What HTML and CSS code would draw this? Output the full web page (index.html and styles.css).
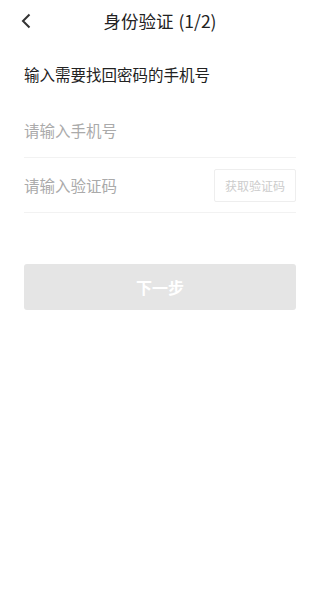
FILE: index.html
```html
<!DOCTYPE html>
<html lang="zh-CN">
<head>
    <meta charset="UTF-8">
    <meta name="viewport" content="width=device-width, initial-scale=1.0">
    <title>身份验证 (1/2)</title>
    <link rel="stylesheet" href="styles.css">
</head>
<body>
    <div class="header">
        <a href="#" class="back">
            <svg width="10" height="16" viewBox="0 0 10 16"><path d="M8.5 1.5 L2 8 L8.5 14.5" fill="none" stroke="#333" stroke-width="2"/></svg>
        </a>
        <h1>身份验证 (1/2)</h1>
    </div>

    <div class="content">
        <h2>输入需要找回密码的手机号</h2>
        <form id="verifyForm">
            <div class="input-row">
                <input type="tel" placeholder="请输入手机号" id="phone">
            </div>
            <div class="input-row">
                <input type="text" placeholder="请输入验证码" id="code">
                <button type="button" class="code-btn" disabled>获取验证码</button>
            </div>
            <button type="submit" class="next-btn" disabled>下一步</button>
        </form>
    </div>
</body>
</html>
```

FILE: styles.css
```css
* {
    margin: 0;
    padding: 0;
    box-sizing: border-box;
    font-family: 'Noto Sans CJK SC', 'Noto Sans', sans-serif;
}

body {
    background: #fff;
    color: #222;
}

.header {
    height: 41px;
    display: flex;
    align-items: center;
    justify-content: center;
    position: relative;
}

.back {
    position: absolute;
    left: 21px;
    top: 13px;
    display: flex;
}

.header h1 {
    font-size: 17.5px;
    font-weight: 400;
    color: #222;
    word-spacing: 1px;
}

.content {
    padding: 0 24px;
}

h2 {
    font-size: 15.5px;
    font-weight: 400;
    margin-top: 22px;
    line-height: 22px;
    margin-bottom: 18px;
}

.input-row {
    height: 55px;
    display: flex;
    align-items: center;
    border-bottom: 1px solid #f2f2f2;
}

input {
    flex: 1;
    border: none;
    outline: none;
    font-size: 15.5px;
    color: #222;
    background: transparent;
}

input::placeholder {
    color: #aaa;
}

.code-btn {
    width: 82px;
    height: 33px;
    border: 1px solid #eee;
    background: #fff;
    color: #ccc;
    font-size: 12px;
    border-radius: 2px;
}

.next-btn {
    width: 100%;
    height: 46px;
    margin-top: 51px;
    border: none;
    border-radius: 3px;
    background: #e5e5e5;
    color: #fff;
    font-size: 16px;
    font-weight: 700;
}
```
